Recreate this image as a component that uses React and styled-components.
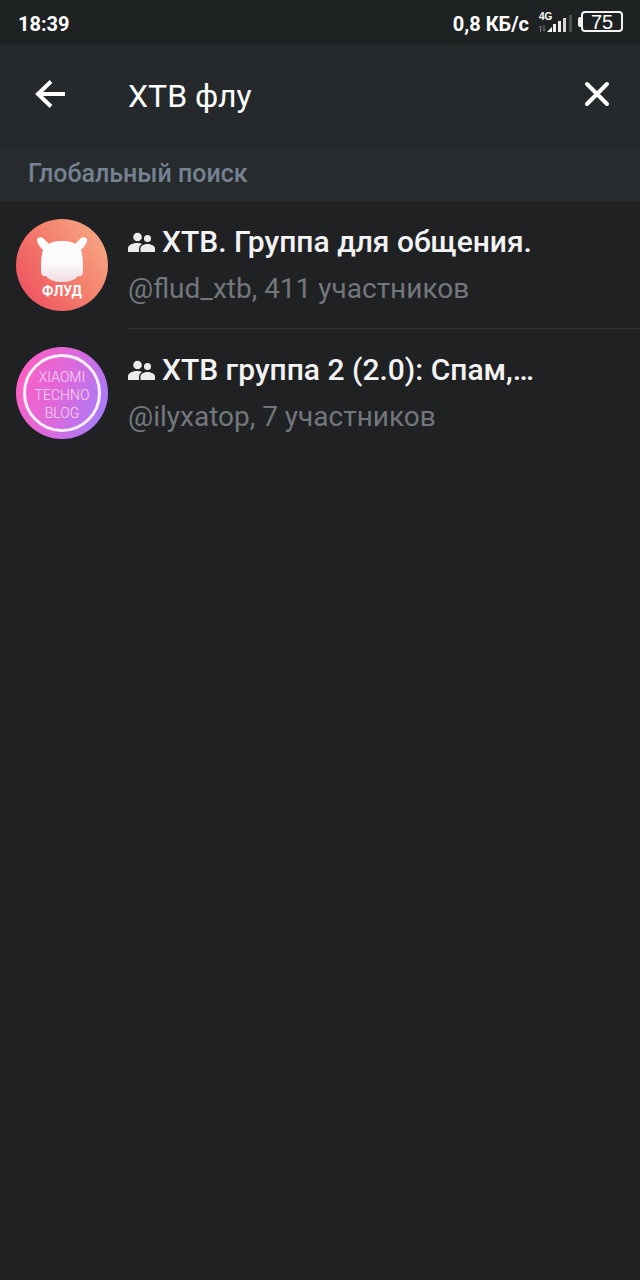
import { useState } from "react";
import styled, { createGlobalStyle } from "styled-components";

const GlobalStyle = createGlobalStyle`
  * {
    box-sizing: border-box;
  }
  body {
    margin: 0;
    background: #202123;
    font-family: Roboto, "Noto Sans", sans-serif;
    color: #f3f3f4;
  }
`;
const Page = styled.div`
  min-height: 100vh;
`;
const StatusBar = styled.div`
  height: 45px;
  padding: 2px 17px 0 18px;
  display: flex;
  align-items: center;
  justify-content: space-between;
  background: #1f2223;
  color: #ffffff;
  font-size: 20px;
  font-weight: 700;
`;
const StatusGroup = styled.div`
  display: flex;
  align-items: center;
`;
const Network = styled.div`
  margin: 0 6px 2px 9px;
  display: flex;
  flex-direction: column;
  font-family: "Liberation Sans", sans-serif;
  font-size: 10px;
  font-weight: 700;
  line-height: 9px;
`;
const NetworkType = styled.span`
  padding-left: 1px;
`;
const SignalIcon = styled.svg`
  width: 34px;
  height: 20px;
  margin-top: -8px;
`;
const BatteryTip = styled.div`
  width: 3px;
  height: 10px;
  border-radius: 2px 0 0 2px;
  background: #f2f2f2;
`;
const Battery = styled.div`
  width: 42px;
  height: 21px;
  border: 2px solid #f2f2f2;
  border-radius: 4px;
  display: flex;
  align-items: center;
  justify-content: center;
  font-family: "Liberation Sans", sans-serif;
  font-size: 20px;
  font-weight: 400;
  line-height: 20px;
`;
const BatteryGroup = styled.div`
  padding-bottom: 4px;
  display: flex;
  align-items: center;
`;
const SearchBar = styled.form`
  height: 101px;
  padding: 0 22px 0 30px;
  display: flex;
  align-items: center;
  background: #26292c;
  border-bottom: 2px solid #232628;
`;
const IconButton = styled.button`
  width: 40px;
  height: 42px;
  flex: none;
  padding: 0;
  border: 0;
  background: none;
  color: #ffffff;

  svg {
    display: block;
    width: 100%;
    height: 100%;
  }
`;
const SearchInput = styled.input`
  flex: 1;
  min-width: 0;
  margin: 0 24px 0 58px;
  padding: 2px 0 0;
  border: 0;
  outline: none;
  background: none;
  color: #ffffff;
  font-family: inherit;
  font-size: 32px;
`;
const SectionTitle = styled.h2`
  height: 55px;
  margin: 0;
  padding: 0 28px;
  display: flex;
  align-items: center;
  background: #272b2e;
  color: #748292;
  font-size: 25px;
  font-weight: 500;
`;
const ResultList = styled.ul`
  margin: 0;
  padding: 0;
  list-style: none;
`;
const ResultItem = styled.li`
  height: 128px;
  padding-left: 16px;
  display: flex;
  gap: 20px;
`;
const Avatar = styled.div`
  width: 92px;
  height: 92px;
  flex: none;
  margin-top: 18px;
  border-radius: 50%;
  background: ${props => props.$background};
  display: flex;
  flex-direction: column;
  align-items: center;
  color: #ffffff;
`;
const MascotIcon = styled.svg`
  width: 56px;
  height: 48px;
  margin-top: 16px;
`;
const MascotLabel = styled.div`
  font-size: 14px;
  font-weight: 700;
  line-height: 16px;
`;
const Ring = styled.div`
  width: 78px;
  height: 78px;
  margin-top: 7px;
  padding-top: 4px;
  border: 3px solid #fff0ff;
  border-radius: 50%;
  display: flex;
  flex-direction: column;
  align-items: center;
  justify-content: center;
  color: #ffdcfb;
  font-size: 14px;
  font-weight: 300;
  line-height: 18px;
`;
const ResultText = styled.div`
  flex: 1;
  min-width: 0;
  padding: 24px 96px 0 0;
  border-bottom: 1px solid ${props => (props.$last ? "transparent" : "#303234")};
`;
const ResultName = styled.div`
  display: flex;
  align-items: center;
  gap: 7px;
  font-size: 30px;
  font-weight: 500;
  line-height: 34px;
  white-space: nowrap;
`;
const GroupIcon = styled.svg`
  width: 27px;
  height: 20px;
  flex: none;
`;
const ResultInfo = styled.div`
  margin-top: 13px;
  color: #73777c;
  font-size: 28px;
  line-height: 34px;
  white-space: nowrap;
`;

function Signal() {
  return (
    <SignalIcon viewBox="0 0 34 20" aria-hidden="true">
      <path d="M2.500 19v-6M1 14.500L2.500 13 4 14.500M6 12v6M4.500 16.500L6 18l1.500-1.500" fill="none" stroke="#777a7b" />
      <path d="M9 19l5-5v5z" fill="#fff" />
      <path d="M15 11h3v8h-3zM20 8h3v11h-3z" fill="#ececec" />
      <path d="M25 5h3v14h-3z" fill="#d6d6d6" />
      <path d="M31 2h3v17h-3z" fill="#4b4e4f" />
    </SignalIcon>
  );
}

function Mascot() {
  return (
    <MascotIcon viewBox="0 0 56 48" aria-hidden="true">
      <defs>
        <linearGradient id="mascot" x1="0" y1="0" x2="0" y2="1">
          <stop offset="0" stopColor="#ffffff" />
          <stop offset="0.600" stopColor="#fbf9fa" />
          <stop offset="1" stopColor="#f0dde0" />
        </linearGradient>
      </defs>
      <path
        d="M3 6C2 3 6 1 9 3c2 2 4 4 6 6 2-2 7-3 13-3s11 1 13 3c2-2 4-4 6-6 3-2 7 0 6 3-1 4-4 7-6 9 2 6 2 14 2 21 0 4-2 6-5 5-3 4-9 6-16 6s-13-2-16-6c-3 1-5-1-5-5 0-7 0-15 2-21-2-2-5-5-6-9z"
        fill="url(#mascot)"
      />
    </MascotIcon>
  );
}

function People() {
  return (
    <GroupIcon viewBox="0 0 27 20" fill="#ececed" aria-hidden="true">
      <circle cx="9.500" cy="5" r="4.300" />
      <circle cx="19.500" cy="6.500" r="3.500" />
      <path d="M0 20v-3.500c0-4 5.500-5.500 9.500-5.500 2 0 3.500 0 4.500 1-2 1-3 3-3 5v3z" />
      <path d="M12.500 20v-3.500c0-3 4-4.500 7-4.500s7.500 1.500 7.500 4.500V20z" />
    </GroupIcon>
  );
}

const results = [
  {
    name: "ХТВ. Группа для общения.",
    info: "@flud_xtb, 411 участников",
    background: "linear-gradient(55deg, #ee5360 10%, #f47c6c 50%, #f6a783 90%)",
    picture: (
      <>
        <Mascot />
        <MascotLabel>ФЛУД</MascotLabel>
      </>
    )
  },
  {
    name: "ХТВ группа 2 (2.0): Спам,…",
    info: "@ilyxatop, 7 участников",
    background: "linear-gradient(110deg, #fb5fc4 10%, #dc69dc 50%, #a77bf7 90%)",
    picture: (
      <Ring>
        <span>XIAOMI</span>
        <span>TECHNO</span>
        <span>BLOG</span>
      </Ring>
    )
  }
];

export default function App() {
  const [query, setQuery] = useState("ХТВ флу");
  return (
    <Page>
      <GlobalStyle />
      <StatusBar>
        <span>18:39</span>
        <StatusGroup>
          <span>0,8 КБ/с</span>
          <Network>
            <NetworkType>4G</NetworkType>
            <Signal />
          </Network>
          <BatteryGroup>
            <BatteryTip />
            <Battery>75</Battery>
          </BatteryGroup>
        </StatusGroup>
      </StatusBar>
      <SearchBar onSubmit={e => e.preventDefault()}>
        <IconButton type="button" aria-label="Назад">
          <svg viewBox="0 0 40 42" fill="none" stroke="currentColor" strokeWidth="4">
            <path d="M35 20H9M21 7.500L8 20l13 12.500" />
          </svg>
        </IconButton>
        <SearchInput
          type="text"
          aria-label="Поиск"
          value={query}
          onChange={e => setQuery(e.target.value)}
        />
        <IconButton type="button" aria-label="Очистить" onClick={() => setQuery("")}>
          <svg viewBox="0 0 40 42" fill="none" stroke="currentColor" strokeWidth="4" strokeLinecap="round">
            <path d="M9 10l20 20M29 10L9 30" />
          </svg>
        </IconButton>
      </SearchBar>
      <SectionTitle>Глобальный поиск</SectionTitle>
      <ResultList>
        {results.map((result, i) => (
          <ResultItem key={result.name}>
            <Avatar $background={result.background}>{result.picture}</Avatar>
            <ResultText $last={i === results.length - 1}>
              <ResultName>
                <People />
                {result.name}
              </ResultName>
              <ResultInfo>{result.info}</ResultInfo>
            </ResultText>
          </ResultItem>
        ))}
      </ResultList>
    </Page>
  );
}
